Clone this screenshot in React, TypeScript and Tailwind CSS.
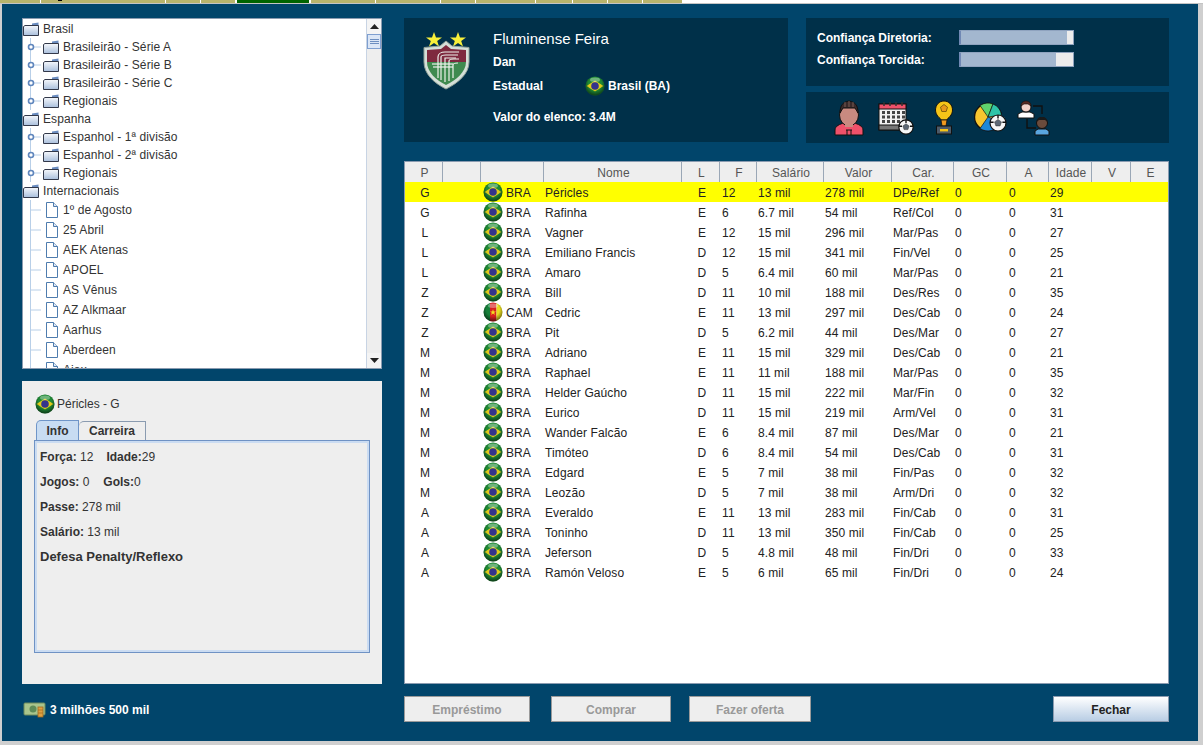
import { useId } from 'react';

type Player = [string, string, string, string, string, string, string, string, string];

const players: Player[] = [
  ['G', 'BRA', 'Péricles', 'E', '12', '13 mil', '278 mil', 'DPe/Ref', '29'],
  ['G', 'BRA', 'Rafinha', 'E', '6', '6.7 mil', '54 mil', 'Ref/Col', '31'],
  ['L', 'BRA', 'Vagner', 'E', '12', '15 mil', '296 mil', 'Mar/Pas', '27'],
  ['L', 'BRA', 'Emiliano Francis', 'D', '12', '15 mil', '341 mil', 'Fin/Vel', '25'],
  ['L', 'BRA', 'Amaro', 'D', '5', '6.4 mil', '60 mil', 'Mar/Pas', '21'],
  ['Z', 'BRA', 'Bill', 'D', '11', '10 mil', '188 mil', 'Des/Res', '35'],
  ['Z', 'CAM', 'Cedric', 'E', '11', '13 mil', '297 mil', 'Des/Cab', '24'],
  ['Z', 'BRA', 'Pit', 'D', '5', '6.2 mil', '44 mil', 'Des/Mar', '27'],
  ['M', 'BRA', 'Adriano', 'E', '11', '15 mil', '329 mil', 'Des/Cab', '21'],
  ['M', 'BRA', 'Raphael', 'E', '11', '11 mil', '188 mil', 'Mar/Pas', '35'],
  ['M', 'BRA', 'Helder Gaúcho', 'D', '11', '15 mil', '222 mil', 'Mar/Fin', '32'],
  ['M', 'BRA', 'Eurico', 'D', '11', '15 mil', '219 mil', 'Arm/Vel', '31'],
  ['M', 'BRA', 'Wander Falcão', 'E', '6', '8.4 mil', '87 mil', 'Des/Mar', '21'],
  ['M', 'BRA', 'Timóteo', 'D', '6', '8.4 mil', '54 mil', 'Des/Cab', '31'],
  ['M', 'BRA', 'Edgard', 'E', '5', '7 mil', '38 mil', 'Fin/Pas', '32'],
  ['M', 'BRA', 'Leozão', 'D', '5', '7 mil', '38 mil', 'Arm/Dri', '32'],
  ['A', 'BRA', 'Everaldo', 'E', '11', '13 mil', '283 mil', 'Fin/Cab', '31'],
  ['A', 'BRA', 'Toninho', 'D', '11', '13 mil', '350 mil', 'Fin/Cab', '25'],
  ['A', 'BRA', 'Jeferson', 'D', '5', '4.8 mil', '48 mil', 'Fin/Dri', '33'],
  ['A', 'BRA', 'Ramón Veloso', 'E', '5', '6 mil', '65 mil', 'Fin/Dri', '24'],
];

const topTabs = [
  'w-[40px] bg-[#b8b46c]',
  'w-[124px] bg-[#b8b46c] pl-[17px]',
  'w-[34px] bg-[#b8b46c]',
  'w-[34px] bg-[#b8b46c]',
  'w-[74px] bg-[#006400] border-x border-white',
  'w-[64px] bg-[#b8b46c]',
  'w-[64px] bg-[#b8b46c]',
  'w-[34px] bg-[#b8b46c]',
  'w-[59px] bg-[#b8b46c]',
  'w-[36px] bg-[#b8b46c]',
  'w-[34px] bg-[#b8b46c]',
  'w-[34px] bg-[#b8b46c]',
  'w-[39px] bg-[#b8b46c]',
];

const Flag = ({ country = 'BRA', size = 20 }: { country?: string; size?: number }) => {
  const id = useId();
  return (
    <svg width={size} height={size} viewBox="0 0 20 20" className="shrink-0">
      <defs>
        <radialGradient id={id} cx="50%" cy="38%" r="68%">
          <stop offset="0.5" stopColor="#000" stopOpacity="0" />
          <stop offset="1" stopColor="#000" stopOpacity="0.7" />
        </radialGradient>
      </defs>
      {country === 'BRA' ? (
        <g>
          <circle cx="10" cy="10" r="9.5" fill="#1f8a35" />
          <path d="M1.5 10 10 4.5 18.5 10 10 15.5Z" fill="#e0cc1c" />
          <circle cx="10" cy="10" r="3.8" fill="#34348c" />
        </g>
      ) : (
        <g>
          <clipPath id={`${id}c`}>
            <circle cx="10" cy="10" r="9.5" />
          </clipPath>
          <g clipPath={`url(#${id}c)`}>
            <rect x="0" y="0" width="7" height="20" fill="#16803a" />
            <rect x="7" y="0" width="6.5" height="20" fill="#d8201f" />
            <rect x="13.5" y="0" width="7" height="20" fill="#e8dc20" />
          </g>
          <path d="M10 7.2 10.8 9.4 13 9.4 11.2 10.8 11.9 13 10 11.6 8.1 13 8.8 10.8 7 9.4 9.2 9.4Z" fill="#f4e020" />
        </g>
      )}
      <circle cx="10" cy="10" r="9.5" fill={`url(#${id})`} />
      <ellipse cx="10" cy="3.8" rx="5" ry="2.2" fill="#fff" opacity="0.35" />
    </svg>
  );
};

const Folder = () => (
  <svg width="16" height="14" viewBox="0 0 16 14" className="shrink-0">
    <defs>
      <linearGradient id="fld" x1="0" y1="0" x2="0" y2="1">
        <stop offset="0" stopColor="#f6f8fc" />
        <stop offset="1" stopColor="#a9bfdc" />
      </linearGradient>
    </defs>
    <path d="M9 1.5 15.5 .5V4H9Z" fill="#6a8cc0" />
    <path d="M.5 13.5V4.5L2 3.5H15.5V13.5Z" fill="url(#fld)" stroke="#33394a" />
  </svg>
);

const FileIcon = () => (
  <svg width="14" height="16" viewBox="0 0 14 16" className="shrink-0">
    <path d="M1.5 .5H8.5L12.5 4.5V15.5H1.5Z" fill="#fff" stroke="#4e7cae" />
    <path d="M8.5 .5V4.5H12.5" fill="#dfe8f4" stroke="#4e7cae" />
  </svg>
);

const Connector = ({ handle }: { handle?: boolean }) => (
  <svg width="20" height="20" viewBox="0 0 20 20" className="shrink-0">
    <path d="M7.5 0V20" stroke="#b8cfe8" fill="none" />
    <path d="M8 10H18" stroke="#b8cfe8" />
    {handle && <circle cx="8" cy="10" r="2.5" fill="#fff" stroke="#5f86bd" strokeWidth="1.6" />}
  </svg>
);

const Root = ({ label }: { label: string }) => (
  <div className="flex h-[18px] items-center gap-[4px]">
    <Folder />
    <span>{label}</span>
  </div>
);

const Branch = ({ label }: { label: string }) => (
  <div className="flex h-[18px] items-center overflow-hidden">
    <Connector handle />
    <Folder />
    <span className="ml-[4px]">{label}</span>
  </div>
);

const Leaf = ({ label }: { label: string }) => (
  <div className="flex h-[20px] items-center overflow-hidden">
    <Connector />
    <span className="ml-[2px] mr-[4px] flex"><FileIcon /></span>
    <span>{label}</span>
  </div>
);

const ScrollArrow = ({ up }: { up?: boolean }) => (
  <div className="flex h-[15px] items-center justify-center bg-[#f4f4f4] shrink-0">
    <svg width="9" height="5" viewBox="0 0 9 5">
      <path d={up ? 'M0 5 4.5 0 9 5Z' : 'M0 0 4.5 5 9 0Z'} fill="#222" />
    </svg>
  </div>
);

const Tree = () => (
  <div className="flex h-[351px] border border-[#8a9bb0] bg-white text-[12px] leading-none tracking-[0.1px] text-[#333]">
    <div className="flex-1 overflow-hidden pt-px">
      <Root label="Brasil" />
      <Branch label="Brasileirão - Série A" />
      <Branch label="Brasileirão - Série B" />
      <Branch label="Brasileirão - Série C" />
      <Branch label="Regionais" />
      <Root label="Espanha" />
      <Branch label="Espanhol - 1ª divisão" />
      <Branch label="Espanhol - 2ª divisão" />
      <Branch label="Regionais" />
      <Root label="Internacionais" />
      {['1º de Agosto', '25 Abril', 'AEK Atenas', 'APOEL', 'AS Vênus', 'AZ Alkmaar', 'Aarhus', 'Aberdeen', 'Ajax'].map((n) => (
        <Leaf key={n} label={n} />
      ))}
    </div>
    <div className="flex w-[15px] flex-col bg-[#eeeeee] border-l border-[#c8d4e4]">
      <ScrollArrow up />
      <div className="flex h-[15px] flex-col items-center justify-center gap-[1px] border border-[#7f9fd0] bg-[#dbe6f6] shrink-0">
        <div className="h-px w-[9px] bg-[#6d8ec0]" />
        <div className="h-px w-[9px] bg-[#6d8ec0]" />
        <div className="h-px w-[9px] bg-[#6d8ec0]" />
      </div>
      <div className="flex-1" />
      <ScrollArrow />
    </div>
  </div>
);

const InfoLine = ({ children }: { children: React.ReactNode }) => (
  <div className="flex h-[25px] items-center whitespace-pre">{children}</div>
);

const InfoPanel = () => (
  <div className="mt-[12px] h-[303px] bg-[#eeeeee] px-[12px] pt-[13px] text-[12px] text-[#333]">
    <div className="flex h-[20px] items-center gap-[2px] pl-px">
      <Flag />
      <span>Péricles - G</span>
    </div>
    <div className="mt-[7px] flex h-[19px] items-end pl-[2px] font-bold">
      <div className="flex h-[20px] w-[43px] items-center justify-center rounded-tl-[5px] border border-b-0 border-[#6f95c8] bg-[#c8dcf2]">Info</div>
      <div className="flex h-[19px] w-[67px] items-center justify-center rounded-tl-[5px] border border-b-0 border-l-0 border-[#8a9bb0]">Carreira</div>
    </div>
    <div className="h-[213px] border border-[#6f92c4] shadow-[inset_0_2px_0_#cbdcf2,inset_2px_0_0_#cbdcf2,inset_-2px_0_0_#cbdcf2,inset_0_-2px_0_#cbdcf2] px-[5px] pt-[3px]">
      <InfoLine><b>Força:</b> 12   <b className="ml-[3px]">Idade:</b>29</InfoLine>
      <InfoLine><b>Jogos:</b> 0   <b className="ml-[4px]">Gols:</b>0</InfoLine>
      <InfoLine><b>Passe:</b> 278 mil</InfoLine>
      <InfoLine><b>Salário:</b> 13 mil</InfoLine>
      <InfoLine><b className="text-[13px]">Defesa Penalty/Reflexo</b></InfoLine>
    </div>
  </div>
);

const Crest = () => (
  <svg width="48" height="58" viewBox="0 0 48 58" className="shrink-0">
    <path d="M11 0 13 5.5 19 5.5 14.2 9 16 14.5 11 11 6 14.5 7.8 9 3 5.5 9 5.5Z" fill="#f7ef3a" />
    <path d="M35 0 37 5.5 43 5.5 38.2 9 40 14.5 35 11 30 14.5 31.8 9 27 5.5 33 5.5Z" fill="#f7ef3a" />
    <path d="M23 9 29 14 46 15.5 V30 C46 42 35 51 23 57 C11 51 1 42 1 30 V15.5 L17 14Z" fill="#d5dfd8" stroke="#93a39a" />
    <path d="M23 13 28 17 43 18 V30 H4 V18 L18 17Z" fill="#7e2a3f" />
    <path d="M4 30H43 C43 40 33 48 23 53 C13 48 4 40 4 30Z" fill="#3f8a4f" />
    <g stroke="#eef2ec" strokeWidth="1.2" fill="none">
      <path d="M15 46V25C15 22 18 20 22 20H36" />
      <path d="M18 48V25C18 24 20 23 23 23H35" />
      <path d="M22 50V26H33" />
      <path d="M26 49V29C26 28 28 27 31 27H36" />
      <path d="M30 46V33C30 32 32 31 35 31" />
      <path d="M9 32H30" />
      <path d="M10 35H30" />
    </g>
  </svg>
);

const ClubPanel = () => (
  <div className="flex h-[124px] w-[384px] bg-[#003049] pl-[19px] pt-[13px] text-[12px] font-bold text-white">
    <div className="pt-[1px]"><Crest /></div>
    <div className="ml-[22px]">
      <div className="flex h-[17px] items-center text-[15px] font-normal">Fluminense Feira</div>
      <div className="mt-[6px] flex h-[16px] items-center">Dan</div>
      <div className="mt-[7px] flex h-[18px] items-center">
        <span className="w-[92px]">Estadual</span>
        <Flag />
        <span className="ml-[3px]">Brasil (BA)</span>
      </div>
      <div className="mt-[14px] flex h-[16px] items-center">Valor do elenco: 3.4M</div>
    </div>
  </div>
);

const Bar = ({ label, fill }: { label: string; fill: string }) => (
  <div className="flex h-[15px] items-start">
    <span className="w-[142px] pt-px leading-[15px]">{label}</span>
    <div className="h-[15px] w-[115px] border border-[#8fa3bf] border-l-2 border-l-[#7088b4] bg-[#ececec]">
      <div className={`h-full bg-[#a3b7cf] ${fill}`} />
    </div>
  </div>
);

const Ball = ({ x, y, r }: { x: number; y: number; r: number }) => {
  const pts = [0, 1, 2, 3, 4].map((i) => {
    const a = (-90 + i * 72) * (Math.PI / 180);
    return `${x + Math.cos(a) * r * 0.45},${y + Math.sin(a) * r * 0.45}`;
  });
  return (
    <g>
      <circle cx={x} cy={y} r={r} fill="#f7f7f7" stroke="#111" strokeWidth="1.2" />
      <polygon points={pts.join(' ')} fill="#5d6875" stroke="#333" strokeWidth=".5" />
      <path d={`M${x} ${y - r}V${y - r * 0.55}M${x - r} ${y - r * 0.1}L${x - r * 0.55} ${y - r * 0.1}M${x + r} ${y - r * 0.1}L${x + r * 0.55} ${y - r * 0.1}`} stroke="#111" strokeWidth="1.4" />
    </g>
  );
};

const PersonIcon = () => (
  <svg width="30" height="36" viewBox="0 0 30 36" className="shrink-0">
    <path d="M1 35V30C1 26 6 24 10 23H20C24 24 29 26 29 30V35Z" fill="#f0516a" stroke="#111" />
    <ellipse cx="15" cy="15" rx="9.5" ry="11" fill="#c98a80" stroke="#111" />
    <rect x="11" y="22" width="8" height="5" fill="#c98a80" />
    <path d="M6 13C6 5 9 2 15 1C21 2 24 5 24 13L21 8H9Z" fill="#3a2a2a" stroke="#111" />
    <path d="M11 2V7M15 1V7M19 2V7" stroke="#8a6a60" strokeWidth=".8" />
    <path d="M13 30V35M17 30V35M12 30H18" stroke="#111" fill="none" />
  </svg>
);

const CalendarIcon = () => (
  <svg width="36" height="34" viewBox="0 0 36 34" className="shrink-0">
    <rect x="1" y="3" width="27" height="26" fill="#f2f2f2" stroke="#111" />
    <rect x="1" y="3" width="27" height="5" fill="#f0516a" stroke="#111" />
    <path d="M6 1V5M12 1V5M18 1V5M24 1V5" stroke="#333" strokeWidth="1.5" />
    {[10, 14.5, 19].map((y) =>
      [4, 9, 14, 19, 24].map((x) => <rect key={`${x}-${y}`} x={x} y={y} width="3" height="3" fill="#444" />),
    )}
    <rect x="1" y="24" width="27" height="5" fill="#777" stroke="#111" />
    <Ball x={28} y={26} r={7.2} />
  </svg>
);

const TrophyIcon = () => (
  <svg width="18" height="35" viewBox="0 0 18 35" className="shrink-0">
    <path d="M9 1C14 1 17.5 5 17.5 10C17.5 15.5 13 18 11.5 20H6.5C5 18 .5 15.5 .5 10C.5 5 4 1 9 1Z" fill="#f5c518" stroke="#111" />
    <path d="M9 4.5 12.5 7.2 11.2 11.5H6.8L5.5 7.2Z" fill="#e89a1c" stroke="#5a4308" strokeWidth=".7" />
    <path d="M6 20H12L11 26H7Z" fill="#f09a20" stroke="#111" strokeWidth=".8" />
    <rect x="1.5" y="26" width="15" height="8" fill="#4d5a68" stroke="#111" />
    <rect x="5" y="29" width="8" height="2.4" fill="#f5c518" />
  </svg>
);

const PieIcon = () => (
  <svg width="33" height="31" viewBox="0 0 33 31" className="shrink-0">
    <circle cx="14" cy="15" r="13.5" fill="#f7c62f" stroke="#111" strokeWidth="1.4" />
    <path d="M14 15 6 3.5A14 14 0 0 1 19 2Z" fill="#5fd36d" stroke="#111" strokeWidth=".7" />
    <path d="M14 15 19 2A14 14 0 0 1 27.5 13Z" fill="#2ec4a8" stroke="#111" strokeWidth=".7" />
    <path d="M14 15 27 20A14 14 0 0 1 6 26.5Z" fill="#1e88d8" stroke="#111" strokeWidth=".7" />
    <Ball x={24} y={21} r={8} />
  </svg>
);

const SwapIcon = () => (
  <svg width="33" height="36" viewBox="0 0 33 36" className="shrink-0">
    <path d="M16 6H25V14M10 19V28H19" fill="none" stroke="#111" strokeWidth="1.4" />
    <path d="M1 18V14L5 12H13L17 14V18Z" fill="#fff" stroke="#111" />
    <circle cx="9" cy="7" r="5" fill="#f3d1c8" stroke="#111" />
    <path d="M4 6C4 2 7 1 9 1S14 2 14 6L11 4H7Z" fill="#5a2a22" stroke="#111" strokeWidth=".6" />
    <path d="M18 35V31L21 29H29L32 31V35Z" fill="#5aa6e0" stroke="#111" />
    <circle cx="25" cy="23" r="5.5" fill="#6a4b3c" stroke="#111" />
    <path d="M19.5 22C19.5 18 22.5 17 25 17S30.5 18 30.5 22L28 20H22Z" fill="#1a1a1a" />
  </svg>
);

const Money = () => (
  <svg width="23" height="16" viewBox="0 0 23 16" className="shrink-0">
    <rect x="1" y="1" width="21" height="12" rx="1" fill="#a9c58c" stroke="#6c8a5c" />
    <circle cx="10" cy="7" r="3.5" fill="#5f8c58" />
    <rect x="15" y="5" width="5" height="10" fill="#e0a040" stroke="#a06a20" strokeWidth=".8" />
    <path d="M15 8H20M15 11H20" stroke="#a06a20" strokeWidth=".7" />
  </svg>
);

const columns = ['w-[38px]', 'w-[38px]', 'w-[63px]', 'w-[138px]', 'w-[38px]', 'w-[37px]', 'w-[67px]', 'w-[68px]', 'w-[62px]', 'w-[53px]', 'w-[42px]', 'w-[43px]', 'w-[39px]', 'w-[37px]'];
const headers = ['P', '', '', 'Nome', 'L', 'F', 'Salário', 'Valor', 'Car.', 'GC', 'A', 'Idade', 'V', 'E'];

const PlayerTable = () => (
  <div className="mt-[18px] h-[523px] overflow-hidden border border-[#8a9bb0] bg-white text-[12px] tracking-[0.1px] text-[#222]">
    <table className="w-[763px] table-fixed border-separate border-spacing-0">
      <colgroup>
        {columns.map((c, i) => <col key={i} className={c} />)}
      </colgroup>
      <thead>
        <tr className="h-[20px]">
          {headers.map((h, i) => (
            <th key={i} className="border-r border-[#9aa7b6] bg-[#eeeeee] p-0 pl-[2px] pt-[2px] text-center font-normal text-[#555] last:border-r-0">{h}</th>
          ))}
        </tr>
      </thead>
      <tbody>
        {players.map((p, i) => (
          <tr key={p[2]} className={i === 0 ? 'h-[20px] bg-[#ffff00]' : 'h-[20px]'}>
            <td className="p-0 pl-[2px] pt-[2px] text-center">{p[0]}</td>
            <td className="p-0" />
            <td className="p-0 pl-[2px]">
              <div className="flex items-center gap-[3px]">
                <Flag country={p[1]} />
                <span className="pt-[2px]">{p[1]}</span>
              </div>
            </td>
            <td className="p-0 pl-px pt-[2px]">{p[2]}</td>
            <td className="p-0 pl-[2px] pt-[2px] text-center">{p[3]}</td>
            <td className="p-0 pl-[2px] pt-[2px]">{p[4]}</td>
            <td className="p-0 pl-px pt-[2px]">{p[5]}</td>
            <td className="p-0 pl-px pt-[2px]">{p[6]}</td>
            <td className="p-0 pl-px pt-[2px]">{p[7]}</td>
            <td className="p-0 pl-px pt-[2px]">0</td>
            <td className="p-0 pl-[2px] pt-[2px]">0</td>
            <td className="p-0 pl-px pt-[2px]">{p[8]}</td>
            <td className="p-0" />
            <td className="p-0" />
          </tr>
        ))}
      </tbody>
    </table>
  </div>
);

const DisabledButton = ({ label, w }: { label: string; w: string }) => (
  <button type="button" className={`h-[26px] border border-[#9a9a9a] bg-[#eeeeee] pt-px text-[12px] font-bold text-[#999] ${w}`}>
    {label}
  </button>
);

export default function App() {
  return (
    <div className="h-[745px] w-[1203px] overflow-hidden bg-[#cfcfcf] font-['Liberation_Sans',Arial,sans-serif]">
      <div className="flex h-[4px] gap-px border-b border-[#c4c4c4] bg-white">
        {topTabs.map((t, i) => (
          <div key={i} className={`h-[3px] ${t}`}>
            {i === 1 && <div className="h-px w-[4px] bg-black" />}
          </div>
        ))}
      </div>
      <div className="ml-[2px] mr-[5px] flex h-[737px] bg-[#01456b] pl-[20px] pt-[14px]">
        <div className="w-[360px]">
          <Tree />
          <InfoPanel />
          <div className="mt-[17px] flex h-[18px] items-center gap-[4px] pl-px text-[12px] font-bold text-white">
            <Money />
            <span>3 milhões 500 mil</span>
          </div>
        </div>
        <div className="ml-[22px] w-[765px]">
          <div className="flex items-start gap-[18px]">
            <ClubPanel />
            <div className="w-[363px]">
              <div className="flex h-[68px] flex-col gap-[7px] bg-[#003049] pl-[11px] pt-[12px] text-[12px] font-bold text-white">
                <Bar label="Confiança Diretoria:" fill="w-[106px]" />
                <Bar label="Confiança Torcida:" fill="w-[95px]" />
              </div>
              <div className="mt-[6px] flex h-[51px] items-center bg-[#003049] pl-[28px]">
                <PersonIcon />
                <span className="ml-[14px] flex"><CalendarIcon /></span>
                <span className="ml-[21px] flex"><TrophyIcon /></span>
                <span className="ml-[21px] flex"><PieIcon /></span>
                <span className="ml-[10px] flex"><SwapIcon /></span>
              </div>
            </div>
          </div>
          <PlayerTable />
          <div className="mt-[12px] flex">
            <DisabledButton label="Empréstimo" w="w-[126px]" />
            <span className="ml-[21px] flex"><DisabledButton label="Comprar" w="w-[120px]" /></span>
            <span className="ml-[18px] flex"><DisabledButton label="Fazer oferta" w="w-[122px]" /></span>
            <button type="button" className="ml-auto h-[26px] w-[116px] border border-[#8a9bb0] bg-gradient-to-b from-white to-[#b8cde4] pt-px text-[12px] font-bold text-[#222]">
              Fechar
            </button>
          </div>
        </div>
      </div>
    </div>
  );
}
